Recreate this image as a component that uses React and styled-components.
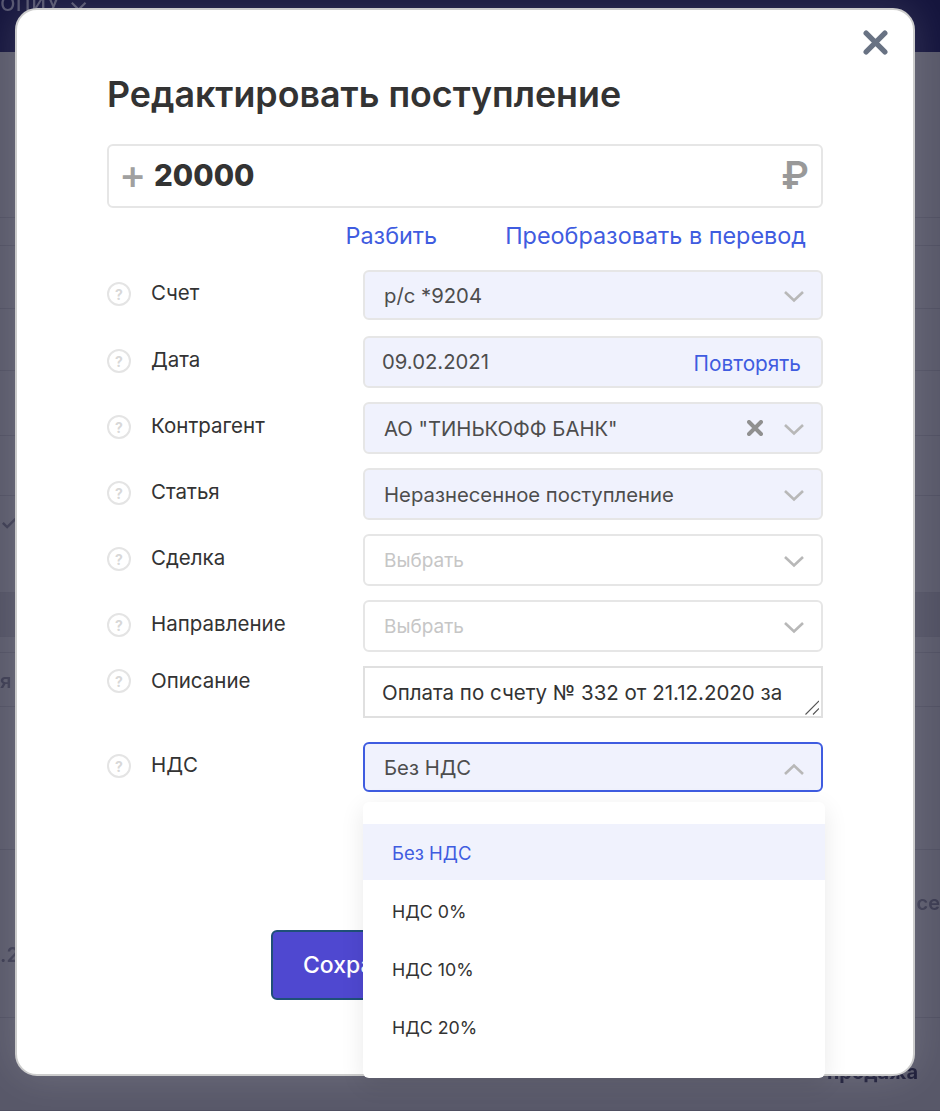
import styled, { createGlobalStyle } from 'styled-components';

const GlobalStyle = createGlobalStyle`
  html, body {
    margin: 0;
    padding: 0;
    background: #54546a;
  }

  body {
    font-family: Inter, "Noto Sans", sans-serif;
  }
`;

const FIELDS = [
  { label: 'Счет', value: 'р/с *9204', filled: true, height: 50, $extra: true },
  { label: 'Дата', value: '09.02.2021', filled: true, height: 52, repeat: true },
  { label: 'Контрагент', value: 'АО "ТИНЬКОФФ БАНК"', filled: true, height: 52, clearable: true },
  { label: 'Статья', value: 'Неразнесенное поступление', filled: true, height: 52 },
  { label: 'Сделка', value: 'Выбрать', height: 52 },
  { label: 'Направление', value: 'Выбрать', height: 52 },
];

const VAT_OPTIONS = ['Без НДС', 'НДС 0%', 'НДС 10%', 'НДС 20%'];

// строки страницы за затемнением
const BACK_ROWS = [
  { height: 166 },
  { height: 28 },
  { height: 63 },
  { height: 62 },
  { height: 65 },
  { height: 60 },
  { height: 97, left: '✓', leftTop: 15 },
  { height: 44, $dark: true },
  { height: 16 },
  { height: 54, left: 'я', leftTop: 16 },
  { height: 143 },
  { height: 168, left: '.2', leftTop: 93, right: 'се', rightTop: 41 },
  { height: 93, right: 'продажа', rightTop: 42, $bold: true },
];

const Chevron = ({ up }) => (
  <ChevronIcon viewBox="0 0 20 12" fill="none">
    <path d={up ? 'M1 11L10 2.5L19 11' : 'M1 1L10 9.5L19 1'} stroke="#b8b8b8" strokeWidth="2.6" />
  </ChevronIcon>
);

const Cross = ({ size, color, width }) => (
  <svg width={size} height={size} viewBox="0 0 24 24" fill="none">
    <path d="M3 3L21 21M21 3L3 21" stroke={color} strokeWidth={width} strokeLinecap="round" />
  </svg>
);

const App = () => {
  return (
    <Page>
      <GlobalStyle />
      <Backdrop>
        <TopBar>
          <TopBarText>опиУ ⌄</TopBarText>
        </TopBar>
        {BACK_ROWS.map((row, idx) => (
          <BackRow key={idx} $height={row.height} $dark={row.$dark}>
            <BackText $top={row.leftTop}>{row.left}</BackText>
            <BackText $top={row.rightTop} $bold={row.$bold}>
              {row.right}
            </BackText>
          </BackRow>
        ))}
      </Backdrop>

      <Modal>
        <CloseBtn>
          <Cross size={25} color="#687283" width={5} />
        </CloseBtn>
        <Title>Редактировать поступление</Title>

        <AmountBox>
          <AmountSign>+</AmountSign>
          <AmountValue>20000</AmountValue>
          <Currency>₽</Currency>
        </AmountBox>

        <LinksRow>
          <LinkText>Разбить</LinkText>
          <LinkText>Преобразовать в перевод</LinkText>
        </LinksRow>

        <Form>
          {FIELDS.map((field) => (
            <FormRow key={field.label} $extra={field.$extra}>
              <HelpIcon>?</HelpIcon>
              <Label>{field.label}</Label>
              <Field $filled={field.filled} $height={field.height}>
                <FieldValue $placeholder={!field.filled} $date={field.repeat}>
                  {field.value}
                </FieldValue>
                {field.repeat ? (
                  <RepeatLink>Повторять</RepeatLink>
                ) : (
                  <FieldIcons>
                    {field.clearable && <Cross size={16} color="#909090" width={6} />}
                    <Chevron />
                  </FieldIcons>
                )}
              </Field>
            </FormRow>
          ))}

          <FormRow $top>
            <HelpIcon $top>?</HelpIcon>
            <Label $top>Описание</Label>
            <DescriptionBox>
              <Description readOnly defaultValue="Оплата по счету № 332 от 21.12.2020 за" />
              <ResizeGrip viewBox="0 0 14 15" fill="none">
                <path d="M0.5 14.5L14 1M8 14.5L14 8.5" stroke="#555555" strokeWidth="1.1" />
              </ResizeGrip>
            </DescriptionBox>
          </FormRow>

          <VatRow>
            <HelpIcon>?</HelpIcon>
            <Label>НДС</Label>
            <Field $filled $open $height={50}>
              <FieldValue>Без НДС</FieldValue>
              <FieldIcons>
                <Chevron up />
              </FieldIcons>
            </Field>
            <Dropdown>
              {VAT_OPTIONS.map((option, idx) => (
                <DropdownItem key={option} $selected={idx === 0}>
                  {option}
                </DropdownItem>
              ))}
            </Dropdown>
          </VatRow>
        </Form>

        <Footer>
          <SaveBtn>Сохранить</SaveBtn>
        </Footer>
      </Modal>
    </Page>
  );
};

export default App;

const Page = styled.div`
  position: relative;
  width: 940px;
  height: 1111px;
  padding: 8px 25px 0 15px;
  box-sizing: border-box;
  overflow: hidden;
`;

const Backdrop = styled.div`
  position: absolute;
  inset: 0;
  background: #585869;
`;

const TopBar = styled.div`
  display: flex;
  align-items: flex-start;
  height: 52px;
  background: #15153d;
`;

const TopBarText = styled.span`
  margin-top: -14px;
  font-size: 26px;
  color: #55556f;
  filter: blur(0.6px);
`;

const BackRow = styled.div`
  display: flex;
  justify-content: space-between;
  align-items: flex-start;
  box-sizing: border-box;
  height: ${({ $height }) => $height}px;
  border-bottom: 1px solid #4f4f61;
  background: ${({ $dark }) => ($dark ? '#505062' : 'transparent')};
`;

const BackText = styled.span`
  margin-top: ${({ $top }) => $top || 0}px;
  margin-right: ${({ $bold }) => ($bold ? '22px' : '0')};
  font-size: 20px;
  line-height: 24px;
  font-weight: ${({ $bold }) => ($bold ? 700 : 600)};
  color: ${({ $bold }) => ($bold ? '#1c1c38' : '#3a3a50')};
  filter: blur(0.5px);
`;

const Modal = styled.div`
  position: relative;
  box-sizing: border-box;
  width: 900px;
  height: 1068px;
  padding: 64px 90px 0;
  border: 2px solid #cccccc;
  border-radius: 22px;
  background: #ffffff;
  box-shadow: 0 0 40px rgba(255, 255, 255, 0.14);
`;

const CloseBtn = styled.div`
  position: absolute;
  top: 20px;
  right: 25px;
  display: flex;
  line-height: 0;
`;

const Title = styled.h1`
  margin: 0;
  font-size: 35.8px;
  line-height: 40px;
  font-weight: 600;
  color: #333333;
`;

const AmountBox = styled.div`
  display: flex;
  align-items: center;
  box-sizing: border-box;
  height: 64px;
  margin-top: 30px;
  padding: 0 12px;
  border: 2px solid #e6e6e6;
  border-radius: 6px;
`;

const AmountSign = styled.span`
  width: 34px;
  margin: -4px 0 0 -2px;
  font-size: 41px;
  line-height: 44px;
  font-weight: 500;
  color: #a0a0a0;
`;

const AmountValue = styled.span`
  flex: 1;
  margin-top: -2px;
  margin-left: 1px;
  font-size: 29.5px;
  font-weight: 800;
  color: #333333;
`;

const Currency = styled.span`
  margin-top: -2px;
  font-size: 38px;
  font-weight: 600;
  color: #999999;
`;

const LinksRow = styled.div`
  display: flex;
  justify-content: flex-end;
  gap: 68px;
  height: 28px;
  margin-top: 14px;
  padding-right: 17px;
`;

const LinkText = styled.span`
  font-size: 23.4px;
  line-height: 28px;
  color: #3f5ce0;
`;

const Form = styled.div`
  display: flex;
  flex-direction: column;
  gap: 14px;
  margin-top: 20px;
`;

const FormRow = styled.div`
  display: grid;
  grid-template-columns: 44px 212px 1fr;
  align-items: ${({ $top }) => ($top ? 'start' : 'center')};
  margin-bottom: ${({ $extra }) => ($extra ? '2px' : '0')};
`;

const VatRow = styled(FormRow)`
  position: relative;
  margin-top: 10px;
`;

const HelpIcon = styled.span`
  display: flex;
  align-items: center;
  justify-content: center;
  box-sizing: border-box;
  width: 24px;
  height: 24px;
  margin-top: ${({ $top }) => ($top ? '3px' : '-2px')};
  border: 2px solid #e4e4e4;
  border-radius: 50%;
  font-size: 14px;
  font-weight: 700;
  color: #d8d8d8;
`;

const Label = styled.span`
  margin-top: ${({ $top }) => ($top ? '2px' : '-4px')};
  font-size: 20.5px;
  line-height: 26px;
  color: #333333;
`;

const Field = styled.div`
  display: flex;
  align-items: center;
  justify-content: space-between;
  box-sizing: border-box;
  height: ${({ $height }) => $height}px;
  padding: 0 17px 0 19px;
  border: 2px solid ${({ $open }) => ($open ? '#3f5ce0' : '#e6e6e6')};
  border-radius: 6px;
  background: ${({ $filled }) => ($filled ? '#f0f2fd' : '#ffffff')};
`;

const FieldValue = styled.span`
  margin-left: ${({ $date }) => ($date ? '-2px' : '0')};
  margin-top: ${({ $date }) => ($date ? '-2px' : '0')};
  font-size: ${({ $placeholder }) => ($placeholder ? 19 : 20.3)}px;
  color: ${({ $placeholder }) => ($placeholder ? '#c6c6c6' : '#4d4d4d')};
`;

const RepeatLink = styled.span`
  margin-top: 2px;
  margin-right: 3px;
  font-size: 20.8px;
  color: #3f5ce0;
`;

const FieldIcons = styled.div`
  display: flex;
  align-items: center;
  gap: 21px;
`;

const ChevronIcon = styled.svg`
  width: 20px;
  height: 12px;
  margin-top: 4px;
`;

const DescriptionBox = styled.div`
  position: relative;
  height: 52px;
`;

const Description = styled.textarea`
  display: block;
  box-sizing: border-box;
  width: 100%;
  height: 52px;
  padding: 12px 17px;
  border: 2px solid #e0e0e0;
  border-radius: 0;
  outline: none;
  resize: none;
  font-family: inherit;
  font-size: 20.5px;
  line-height: 26px;
  color: #333333;
  overflow: hidden;
`;

const ResizeGrip = styled.svg`
  position: absolute;
  right: 4px;
  bottom: 3px;
  width: 14px;
  height: 15px;
`;

const Dropdown = styled.div`
  position: absolute;
  top: 60px;
  left: 256px;
  z-index: 2;
  box-sizing: border-box;
  width: 462px;
  height: 276px;
  padding-top: 22px;
  border-radius: 6px;
  background: #ffffff;
  box-shadow: 0 6px 24px rgba(0, 0, 0, 0.09);
`;

const DropdownItem = styled.div`
  display: flex;
  align-items: center;
  box-sizing: border-box;
  height: ${({ $selected }) => ($selected ? 56 : 58)}px;
  padding: ${({ $selected }) => ($selected ? '2px' : '4px')} 0 0 29px;
  font-size: ${({ $selected }) => ($selected ? 18.5 : 17.8)}px;
  color: ${({ $selected }) => ($selected ? '#3f5ce0' : '#333333')};
  background: ${({ $selected }) => ($selected ? '#f0f2fd' : 'transparent')};
`;

const Footer = styled.div`
  display: flex;
  margin-top: 138px;
  padding-left: 164px;
`;

const SaveBtn = styled.button`
  height: 70px;
  padding: 0 30px;
  border: 2px solid #1f5078;
  border-radius: 6px;
  background: #4f48d0;
  font-family: inherit;
  font-size: 23px;
  font-weight: 500;
  color: #ffffff;
`;
